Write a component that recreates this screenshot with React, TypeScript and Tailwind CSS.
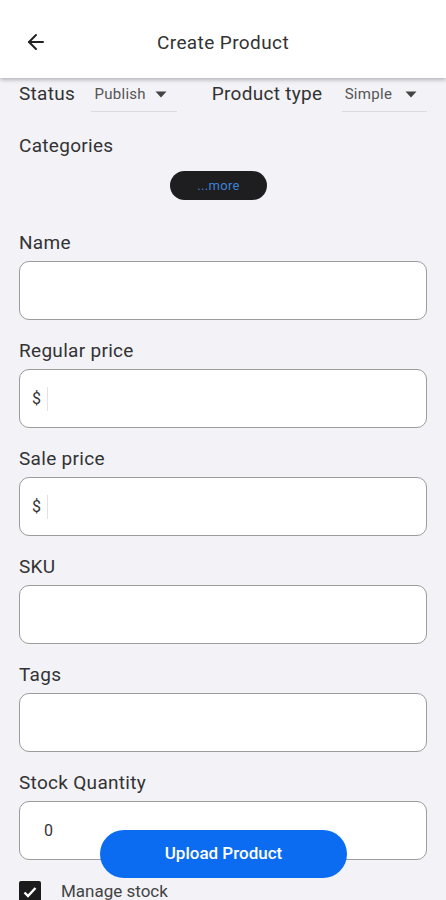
import { ArrowLeft } from "lucide-react";

const fields = [
  { label: "Name" },
  { label: "Regular price", prefix: "$" },
  { label: "Sale price", prefix: "$" },
  { label: "SKU" },
  { label: "Tags" },
  { label: "Stock Quantity", value: "0" },
];

function Dropdown({ value }: { value: string }) {
  return (
    <div className="flex h-[34px] w-[86px] items-center justify-between border-b border-[#dcdce0] pl-[3px] pr-[10px]">
      <span className="text-[15px] tracking-[0.3px] text-[#555]">{value}</span>
      <svg width="12" height="7" viewBox="0 0 12 7" className="fill-[#444]">
        <path d="M0.5 0.5h11L6 6.5z" />
      </svg>
    </div>
  );
}

function Field({ label, prefix, value }: { label: string; prefix?: string; value?: string }) {
  return (
    <div className="flex flex-col">
      <div className="h-[24px] text-[19px] leading-[24px] tracking-[0.3px] text-[#333]">{label}</div>
      <div className="mt-[6px] flex h-[59px] items-center rounded-[10px] border border-[#9c9c9c] bg-white">
        {prefix && (
          <>
            <span className="ml-[12px] text-[16px] text-[#333]">{prefix}</span>
            <span className="ml-[6px] h-[24px] w-px bg-[#e2e2e2]" />
          </>
        )}
        {value && <span className="ml-[24px] text-[16px] text-[#333]">{value}</span>}
      </div>
    </div>
  );
}

export default function App() {
  return (
    <div className="relative h-[900px] w-[446px] overflow-hidden bg-[#f2f2f7] font-['Roboto',sans-serif]">
      <header className="relative z-10 flex h-[78px] items-center bg-white shadow-[0_2px_4px_rgba(0,0,0,0.25)]">
        <ArrowLeft className="ml-[24px] mt-[6px] h-[24px] w-[24px] text-[#222]" strokeWidth={2} />
        <div className="absolute left-0 right-0 top-[31px] text-center text-[19px] leading-[24px] tracking-[0.4px] text-[#333]">
          Create Product
        </div>
      </header>

      <div className="px-[19px]">
        <div className="flex items-center">
          <span className="mt-[-2px] w-[73px] text-[19px] leading-[24px] tracking-[0.3px] text-[#333]">Status</span>
          <Dropdown value="Publish" />
          <span className="mt-[-2px] ml-[35px] w-[131px] text-[19px] leading-[24px] tracking-[0.3px] text-[#333]">
            Product type
          </span>
          <Dropdown value="Simple" />
        </div>

        <div className="mt-[22px] text-[19px] leading-[24px] tracking-[0.3px] text-[#333]">Categories</div>
        <div className="mt-[13px] flex justify-center">
          <div className="ml-[-9px] flex h-[29px] w-[97px] items-center justify-center rounded-full bg-[#1e1e20] text-[13px] tracking-[0.3px] text-[#3b82d6]">
            ...more
          </div>
        </div>

        <div className="mt-[31px] flex flex-col gap-[19px]">
          {fields.map((f) => (
            <Field key={f.label} {...f} />
          ))}
        </div>

        <div className="mt-[19px] flex items-center">
          <div className="flex h-[22px] w-[22px] items-center justify-center rounded-[2px] bg-[#1b1b1b]">
            <svg width="16" height="16" viewBox="0 0 16 16" fill="none" stroke="white" strokeWidth="2.4">
              <path d="M2.5 8.5l3.5 3.5 7.5-8" />
            </svg>
          </div>
          <span className="ml-[20px] text-[17px] text-[#444]">Manage stock</span>
        </div>
      </div>

      <button className="absolute left-[100px] top-[830px] h-[48px] w-[247px] rounded-full bg-[#0b6cf2] text-[17px] font-medium text-white">
        Upload Product
      </button>
    </div>
  );
}
